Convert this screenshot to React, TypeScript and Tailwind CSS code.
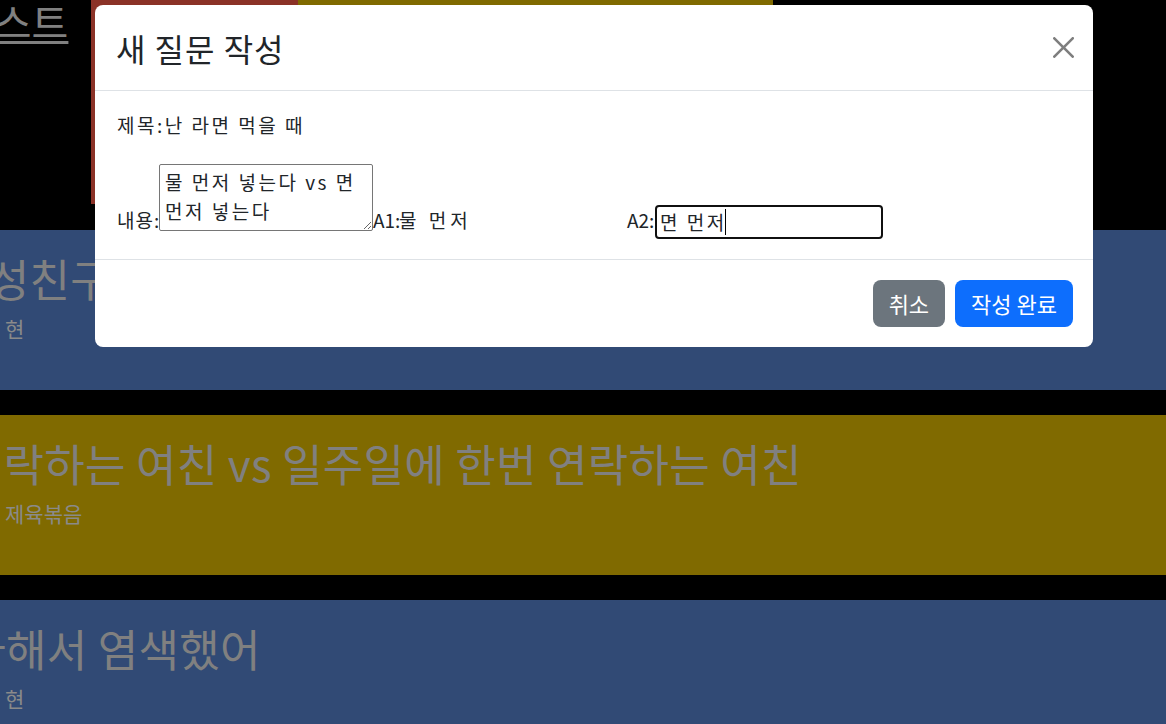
import React from 'react';

const rows = [
  { title: '동성친구 vs 이성친구 누가 더 편해?', sub: '현', color: 'bg-[#314a75]', shift: '-ml-[57px]' },
  { title: '매일 연락하는 여친 vs 일주일에 한번 연락하는 여친', sub: '제육볶음', color: 'bg-[#806a00]', shift: '-ml-[134px]' },
  { title: '여친이 하라해서 염색했어', sub: '현', color: 'bg-[#314a75]', shift: '-ml-[213px]' },
];

const CloseIcon: React.FC = () => (
  <svg viewBox="0 0 16 16" className="w-[21px] h-[21px]" fill="#000" opacity={0.5}>
    <path d="M.293.293a1 1 0 0 1 1.414 0L8 6.586 14.293.293a1 1 0 1 1 1.414 1.414L9.414 8l6.293 6.293a1 1 0 0 1-1.414 1.414L8 9.414l-6.293 6.293a1 1 0 0 1-1.414-1.414L6.586 8 .293 1.707a1 1 0 0 1 0-1.414z" />
  </svg>
);

export default function App() {
  return (
    <div className="relative w-[1166px] h-[724px] overflow-hidden bg-black font-['Noto_Sans_CJK_KR','Noto_Sans',sans-serif]">
      {/* page behind the modal */}
      <div className="flex flex-col gap-[25px]">
        <div className="flex h-[205px]">
          <div className="w-[91px] overflow-hidden pt-[2px]">
            <h1 className="-ml-[42px] whitespace-nowrap text-[40px] leading-[38px] text-[#808080] underline decoration-[3px] underline-offset-[3px]">
              리스트
            </h1>
          </div>
          <div className="w-[207px] h-[204px] bg-[#8b3227]" />
          <div className="w-[475px] h-[204px] bg-[#806a00]" />
        </div>
        {rows.map((r, i) => (
          <div key={i} className={`h-[160px] pt-[23px] px-[5px] overflow-hidden ${r.color}`}>
            <div className={`whitespace-nowrap text-[44px] leading-[50px] tracking-[0.3px] text-[#808080] ${r.shift}`}>{r.title}</div>
            <div className="mt-[11px] text-[21px] leading-[28px] text-[#8a8a8a]">{r.sub}</div>
          </div>
        ))}
      </div>

      {/* modal */}
      <div className="absolute left-[95px] top-[5px] w-[998px] bg-white rounded-[8px] text-[#212529]">
        <div className="h-[86px] flex items-center justify-between pl-[21px] pr-[19px] border-b border-[#dee2e6]">
          <h5 className="text-[32px] leading-[40px] tracking-[1px]">새 질문 작성</h5>
          <button className="w-[22px] h-[22px] flex items-center justify-center">
            <CloseIcon />
          </button>
        </div>

        <div className="h-[168px] pt-[22px] px-[22px] text-[19px]">
          <div className="leading-[24px] tracking-[2.5px]">제목:난 라면 먹을 때</div>
          <div className="mt-[27px] flex items-end h-[75px]">
            <span className="w-[42px] shrink-0 leading-[24px] mb-[7px] tracking-[1px] whitespace-nowrap">내용:</span>
            <textarea
              defaultValue="물 먼저 넣는다 vs 면 먼저 넣는다"
              className="w-[214px] h-[67px] shrink-0 mb-[8px] border border-[#767676] rounded-[2px] pl-[5px] pr-[4px] py-[2px] text-[19px] leading-[29px] tracking-[2.5px]"
            />
            <span className="w-[26px] shrink-0 leading-[24px] mb-[7px]">A1:</span>
            <input
              defaultValue="물 먼저"
              className="w-[228px] shrink-0 h-[24px] leading-[24px] mb-[7px] tracking-[4px] outline-none"
            />
            <span className="w-[28px] shrink-0 leading-[24px] mb-[7px]">A2:</span>
            <div className="w-[228px] h-[34px] shrink-0 border-2 border-[#101010] rounded-[4px] px-[3px] flex items-center leading-[24px]">
              <span className="tracking-[2.5px]">면 먼저</span>
              <span className="-ml-[2px] w-px h-[26px] bg-black" />
            </div>
          </div>
        </div>

        <div className="flex justify-end gap-[10px] border-t border-[#dee2e6] pt-[20px] pb-[20px] pr-[20px]">
          <button className="h-[47px] px-[16px] rounded-[8px] bg-[#6c757d] text-white text-[22px]">취소</button>
          <button className="h-[47px] px-[16px] rounded-[8px] bg-[#0d6efd] text-white text-[22px]">작성 완료</button>
        </div>
      </div>
    </div>
  );
}
